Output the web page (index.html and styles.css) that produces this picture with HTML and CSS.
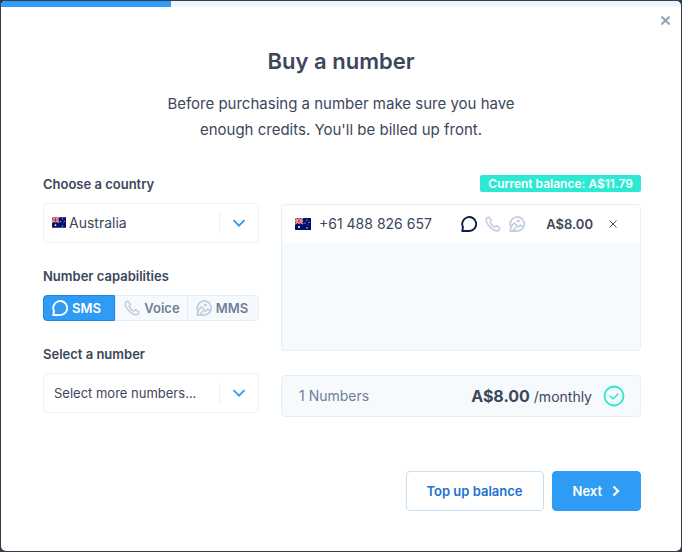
FILE: index.html
```html
<!DOCTYPE html>
<html lang="en">
<head>
  <meta charset="UTF-8">
  <meta name="viewport" content="width=device-width, initial-scale=1.0">
  <title>Buy a number</title>
  <link rel="stylesheet" href="styles.css">
</head>
<body>

  <!-- shared icons -->
  <svg class="sprite" aria-hidden="true">
    <symbol id="icon-sms" viewBox="0 0 16 16">
      <path d="M1.200 15l.8-3.800a7 7 0 1 1 6 3.800z" fill="none" stroke="currentColor" stroke-width="1.900" stroke-linejoin="round"/>
    </symbol>
    <symbol id="icon-voice" viewBox="0 0 16 16">
      <path d="M3.800 1 1.600 2.200C.7 4.300 1.800 7.500 5.100 10.900S11.700 15.600 14 14.300L15 12.100 11.800 9.700 9.900 11C8.200 10.300 5.900 8 5.200 6.200L6.300 4.300z" fill="none" stroke="currentColor" stroke-width="1.600" stroke-linejoin="round"/>
    </symbol>
    <symbol id="icon-mms" viewBox="0 0 16 16">
      <path d="M1.200 15l.8-3.800a7 7 0 1 1 6 3.800z" fill="none" stroke="currentColor" stroke-width="1.800" stroke-linejoin="round"/>
      <path d="M1.800 10.800 5.300 7l4.200 4 2-2 2.800 2M4 14.500l3.500-4" fill="none" stroke="currentColor" stroke-width="1.700"/>
      <circle cx="9.200" cy="5" r="1.600" fill="currentColor"/>
    </symbol>
    <symbol id="icon-chevron" viewBox="0 0 14 8">
      <path d="M1.500 1.200 7 6.700l5.500-5.500" fill="none" stroke="currentColor" stroke-width="1.800"/>
    </symbol>
    <symbol id="flag-au" viewBox="0 0 16 12">
      <path d="M0 0h16v12H0z" fill="#00126b"/>
      <path d="M0 0l8 6M8 0 0 6" stroke="#fff" stroke-width="1.400"/>
      <path d="M0 0l8 6M8 0 0 6" stroke="#e0182d" stroke-width=".6"/>
      <path d="M4 0v6M0 3h8" stroke="#fff" stroke-width="2"/>
      <path d="M4 0v6M0 3h8" stroke="#e0182d" stroke-width="1.200"/>
      <g fill="#fff">
        <circle cx="4" cy="9" r="1"/>
        <circle cx="12" cy="2" r=".6"/>
        <circle cx="10" cy="5" r=".6"/>
        <circle cx="14" cy="4.500" r=".6"/>
        <circle cx="12" cy="10" r=".7"/>
        <circle cx="13" cy="6.500" r=".3"/>
      </g>
    </symbol>
  </svg>

  <main class="modal">
    <div class="progress"><div class="progress-bar"></div></div>
    <button class="close" type="button" aria-label="Close">
      <svg width="9" height="9" viewBox="0 0 9 9"><path d="M.5.500l8 8M8.500.500l-8 8" stroke="currentColor" stroke-width="2"/></svg>
    </button>

    <header class="intro">
      <h1>Buy a number</h1>
      <p>Before purchasing a number make sure you have enough credits. You'll be billed up front.</p>
    </header>

    <form>
      <div class="columns">
        <div class="options">
          <div class="field">
            <label class="title" for="country">Choose a country</label>
            <div class="select with-flag">
              <svg class="flag" width="14" height="11"><use href="#flag-au"/></svg>
              <select id="country">
                <option>Australia</option>
              </select>
              <span class="arrow"><svg width="14" height="8"><use href="#icon-chevron"/></svg></span>
            </div>
          </div>

          <div class="field" role="radiogroup" aria-labelledby="capabilities">
            <div class="title" id="capabilities">Number capabilities</div>
            <div class="toggle">
              <label><input type="radio" name="capability" checked><svg width="16" height="16"><use href="#icon-sms"/></svg><span>SMS</span></label>
              <label><input type="radio" name="capability"><svg width="16" height="16"><use href="#icon-voice"/></svg><span>Voice</span></label>
              <label><input type="radio" name="capability"><svg width="16" height="16"><use href="#icon-mms"/></svg><span>MMS</span></label>
            </div>
          </div>

          <div class="field">
            <label class="title" for="number">Select a number</label>
            <div class="select">
              <select id="number">
                <option>Select more numbers...</option>
              </select>
              <span class="arrow"><svg width="14" height="8"><use href="#icon-chevron"/></svg></span>
            </div>
          </div>
        </div>

        <div class="cart">
          <div class="balance">Current balance: A$11.79</div>
          <div class="numbers">
            <div class="number">
              <svg width="16" height="12"><use href="#flag-au"/></svg>
              <span class="phone">+61 488 826 657</span>
              <span class="icons">
                <svg class="on" width="16" height="16"><use href="#icon-sms"/></svg>
                <svg width="16" height="16"><use href="#icon-voice"/></svg>
                <svg width="16" height="16"><use href="#icon-mms"/></svg>
              </span>
              <span class="price">A$8.00</span>
              <button class="remove" type="button" aria-label="Remove number">
                <svg width="8" height="8" viewBox="0 0 8 8"><path d="M.5.500l7 7M7.500.500l-7 7" stroke="currentColor"/></svg>
              </button>
            </div>
          </div>
          <div class="summary">
            <span class="count">1 Numbers</span>
            <span class="total"><strong>A$8.00</strong> /monthly</span>
            <svg class="check" width="22" height="22" viewBox="0 0 22 22" fill="none" stroke="currentColor">
              <circle cx="11" cy="11" r="9.500" stroke-width="1.800"/>
              <path d="M7 11l3 3 5-5" stroke-width="1.600" stroke-linecap="round" stroke-linejoin="round"/>
            </svg>
          </div>
        </div>
      </div>

      <div class="actions">
        <button class="btn btn-outline" type="button">Top up balance</button>
        <button class="btn btn-primary" type="submit">Next
          <svg width="8" height="10" viewBox="0 0 8 10"><path d="M1.500.500 6 5 1.500 9.500" fill="none" stroke="currentColor" stroke-width="2.200"/></svg>
        </button>
      </div>
    </form>
  </main>

</body>
</html>
```

FILE: styles.css
```css
* {
  box-sizing: border-box;
}
body {
  margin: 0;
  padding: 1px;
  background-color: #303c52;
  color: #3c475c;
  font-family: Inter, "Liberation Sans", sans-serif;
  font-size: 14px;
  line-height: 20px;
}
svg {
  display: block;
  flex: none;
}
button, select {
  font: inherit;
  color: inherit;
}
button {
  cursor: pointer;
}
.sprite {
  position: absolute;
  width: 0;
  height: 0;
}
.modal {
  position: relative;
  min-height: calc(100vh - 2px);
  padding-bottom: 40px;
  background-color: #fff;
  border-radius: 5px;
  overflow: hidden;
}
.progress {
  height: 6px;
  background-color: #eff5fe;
}
.progress-bar {
  width: 25%;
  height: 100%;
  background-color: #2e9bf5;
}
.close {
  position: absolute;
  top: 11px;
  right: 7px;
  padding: 4px;
  border: none;
  background: none;
  color: #94a3b8;
}

.intro {
  max-width: 400px;
  margin: 38px auto 31px;
  text-align: center;
}
h1 {
  margin: 0 0 14px;
  font-size: 22px;
  font-weight: 600;
  line-height: 32px;
}
.intro p {
  margin: 0;
  font-size: 15px;
  line-height: 26px;
}

form {
  padding: 0 40px 0 42px;
}
.columns {
  display: grid;
  grid-template-columns: 3fr 5fr;
  gap: 22px;
}
.options {
  display: flex;
  flex-direction: column;
  gap: 23px;
}
.title {
  display: block;
  margin-bottom: 9px;
  font-size: 13px;
  font-weight: 600;
}

/* drop-downs */
.select {
  position: relative;
}
.select select {
  display: block;
  width: 100%;
  height: 40px;
  padding: 0 44px 0 10px;
  border: 1px solid #eaf1fc;
  border-radius: 4px;
  background-color: #fff;
  font-size: 13px;
  appearance: none;
}
.with-flag select {
  padding-left: 25px;
  font-size: 14px;
}
.flag {
  position: absolute;
  top: 14px;
  left: 9px;
}
.arrow {
  position: absolute;
  top: 9px;
  right: 0;
  display: flex;
  align-items: center;
  justify-content: center;
  width: 40px;
  height: 22px;
  padding-right: 2px;
  border-left: 1px solid #eaf1fc;
  color: #2e9bf5;
  pointer-events: none;
}

/* capabilities */
.toggle {
  display: grid;
  grid-template-columns: repeat(3, 1fr);
  height: 26px;
  border: 1px solid #e3effb;
  border-radius: 4px;
  background-color: #f6fafd;
}
.toggle label {
  display: flex;
  align-items: center;
  gap: 4px;
  padding-left: 8px;
  color: #718096;
  font-size: 13px;
  font-weight: 600;
  cursor: pointer;
}
.toggle label + label {
  border-left: 1px solid #e3effb;
}
.toggle svg {
  color: #c5cfe0;
}
.toggle input {
  position: absolute;
  opacity: 0;
  pointer-events: none;
}
.toggle label:has(input:checked) {
  margin: -1px 0 -1px -1px;
  border: 1px solid #2386dc;
  border-radius: 4px 0 0 4px;
  background-color: #2e9bf5;
  color: #fff;
}
.toggle label:has(input:checked) svg {
  color: #fff;
}

/* chosen numbers */
.cart {
  display: flex;
  flex-direction: column;
  padding-top: 1px;
}
.balance {
  align-self: flex-end;
  margin-bottom: 12px;
  padding: 0 8px;
  border-radius: 2px;
  background-color: #2ce9d3;
  color: #fff;
  font-size: 12px;
  font-weight: 600;
  line-height: 17px;
}
.numbers {
  min-height: 147px;
  border: 1px solid #e3effb;
  border-radius: 4px;
  background-color: #f6fafd;
  overflow: hidden;
}
.number {
  display: flex;
  align-items: center;
  height: 38px;
  padding: 0 18px 0 13px;
  background-color: #fff;
}
.phone {
  margin-left: 8px;
}
.icons {
  display: flex;
  gap: 8px;
  margin-left: auto;
  color: #c5cfe0;
}
.icons .on {
  color: #0b1f45;
}
.price {
  margin: 0 11px 0 21px;
  font-size: 13px;
  font-weight: 600;
}
.remove {
  padding: 5px;
  border: none;
  background: none;
}
.summary {
  display: flex;
  align-items: center;
  min-height: 42px;
  margin-top: 24px;
  padding: 0 15px 0 17px;
  border: 1px solid #e3effb;
  border-radius: 4px;
  background-color: #f6fafd;
}
.count {
  color: #718096;
}
.total {
  margin-left: auto;
}
.total strong {
  font-size: 16px;
  font-weight: 700;
}
.check {
  margin-left: 11px;
  color: #2ce9d3;
}

.actions {
  display: flex;
  justify-content: flex-end;
  gap: 8px;
  margin-top: 54px;
}
.btn {
  display: flex;
  align-items: center;
  gap: 10px;
  height: 40px;
  padding: 0 20px;
  border: 1px solid #2e9bf5;
  border-radius: 4px;
  font-size: 13px;
  font-weight: 600;
}
.btn-outline {
  border-color: #c6e0f8;
  background-color: #fff;
  color: #2270d2;
}
.btn-primary {
  background-color: #2e9bf5;
  color: #fff;
}
```
